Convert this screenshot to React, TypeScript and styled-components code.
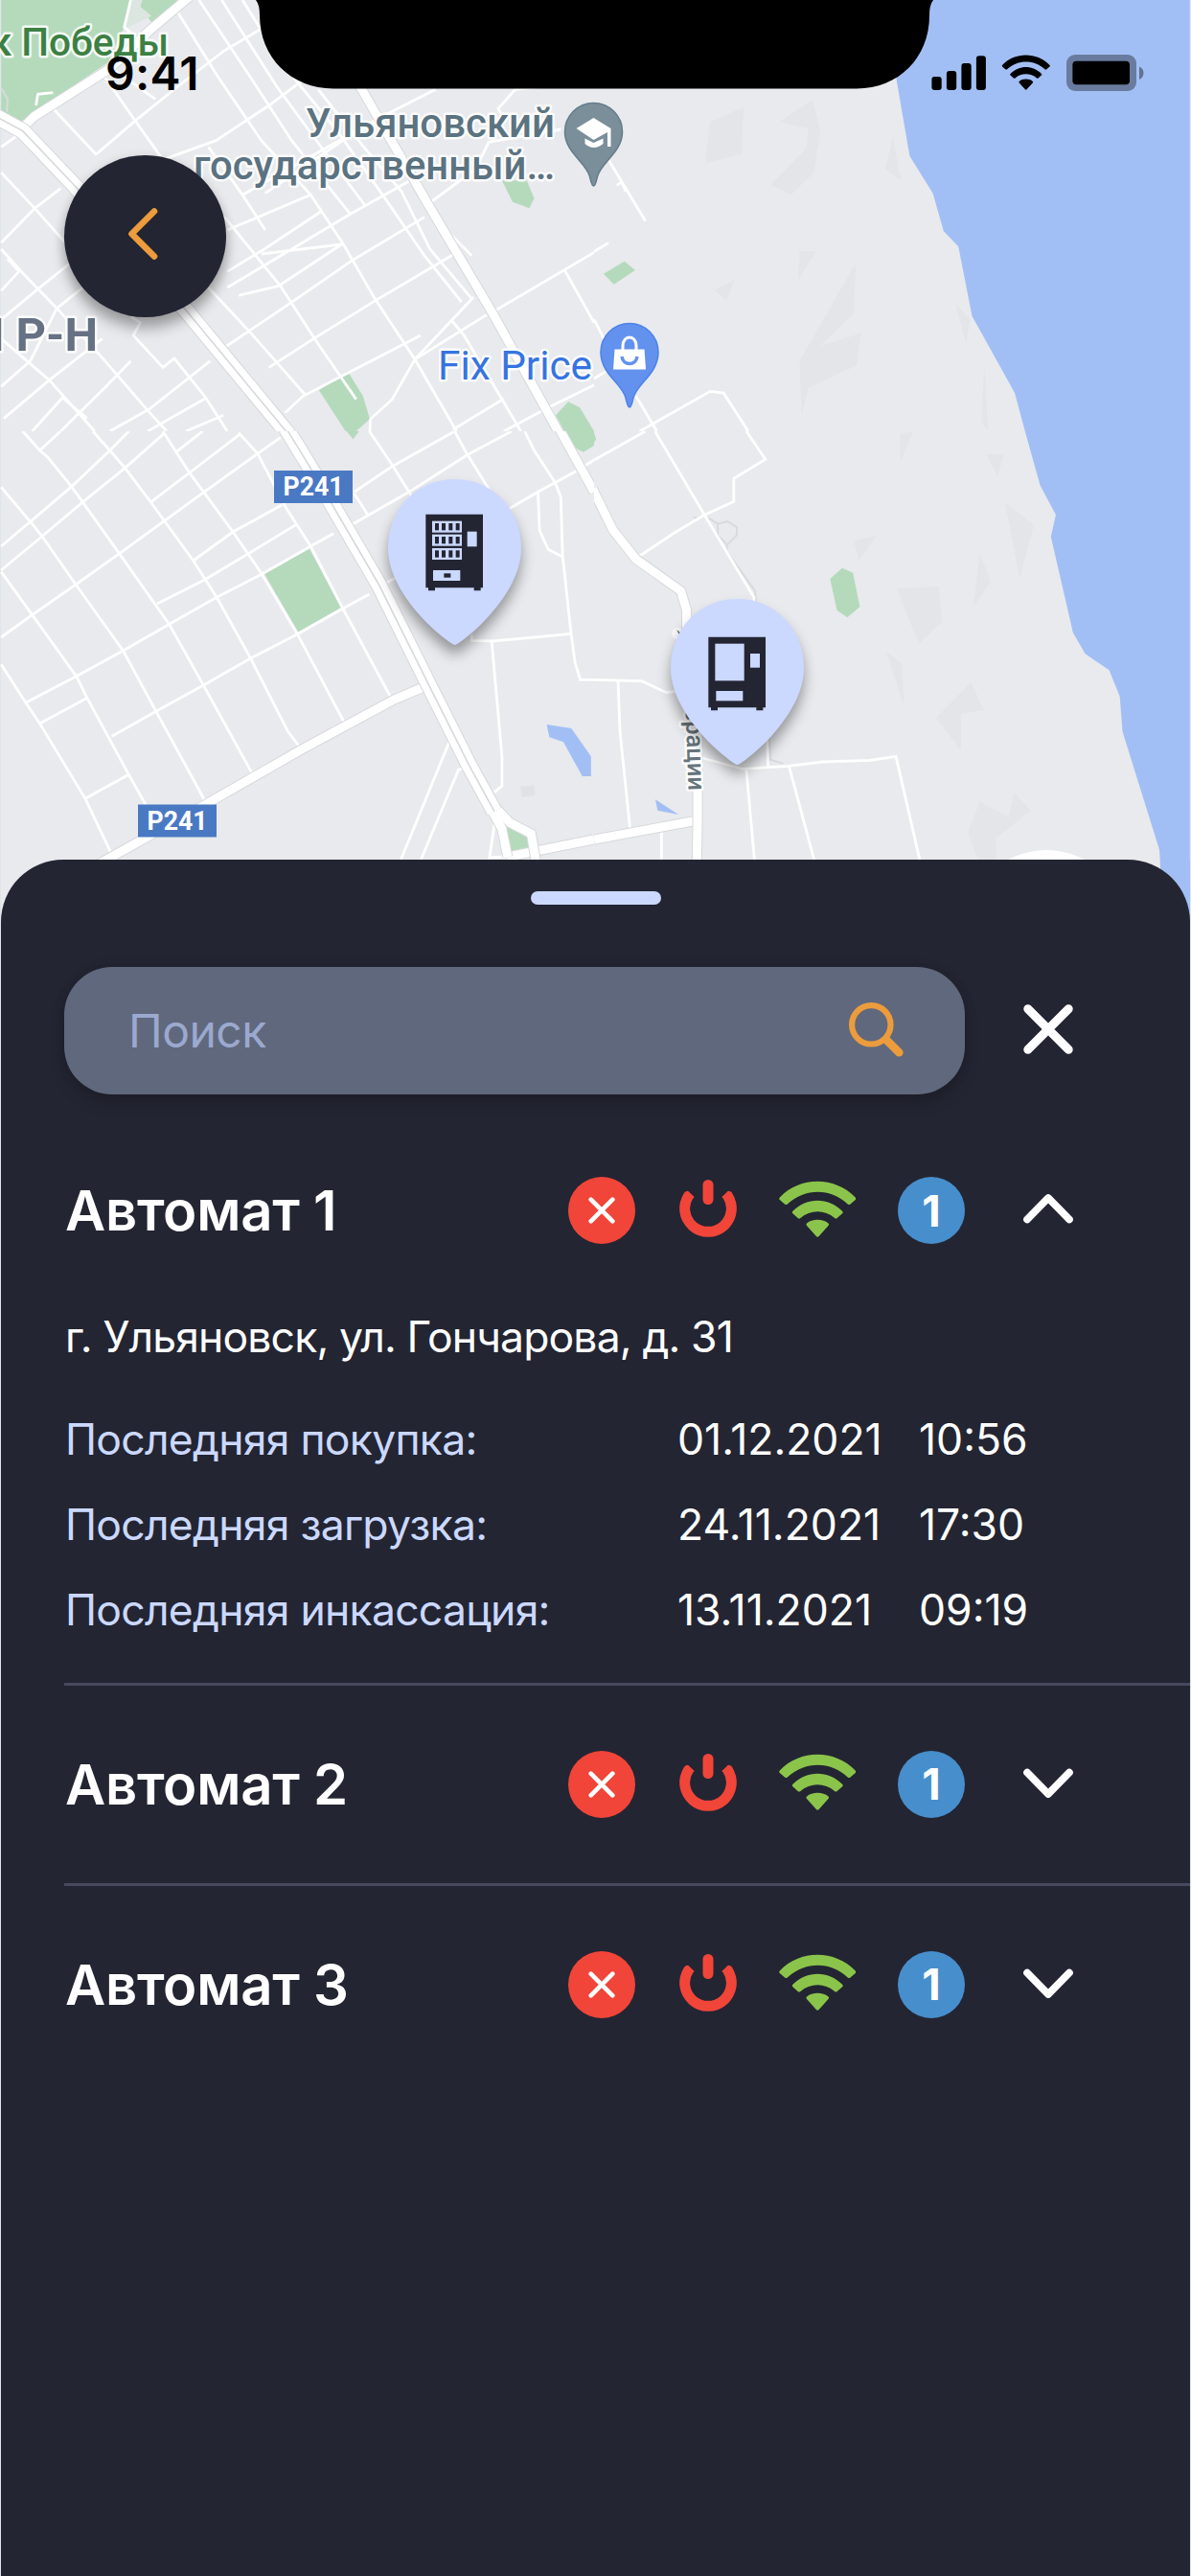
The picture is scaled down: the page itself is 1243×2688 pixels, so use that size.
import React, { useState } from "react";
import styled, { createGlobalStyle } from "styled-components";

const color = {
  ink: "#232532",
  field: "#60687d",
  hint: "#9ba9cf",
  lavender: "#cbd8ff",
  orange: "#ec9c3c",
  red: "#f14539",
  green: "#8bc44a",
  blue: "#478ecc",
  line: "#48495f",
};

const GlobalStyle = createGlobalStyle`
  *, *::before, *::after { box-sizing: border-box; }
  body { margin: 0; background: #dfe6ea; }
  button { border: 0; padding: 0; background: none; cursor: pointer; }
`;

const Screen = styled.main`
  position: relative;
  display: flex;
  flex-direction: column;
  width: 1243px;
  height: 2688px;
  padding: 0 1px;
  overflow: hidden;
  font-family: Inter, "Liberation Sans", sans-serif;
`;

const MapArea = styled.section`
  position: relative;
  flex: none;
  height: 897px;
`;

const MapSvg = styled.svg`
  position: absolute;
  top: 0;
  left: -1px;
  display: block;

  .park { fill: #b4dabb; }
  .water { fill: #a2bff5; }
  .relief { fill: #e4e5e9; }
  .street { fill: none; stroke: #fff; stroke-width: 2.8; vector-effect: non-scaling-stroke; }
  .path { fill: none; stroke: #d9dadd; stroke-width: 2; vector-effect: non-scaling-stroke; }
  .casing { fill: none; stroke: #d7d8dc; stroke-width: 11; vector-effect: non-scaling-stroke; }
  .avenue { fill: none; stroke: #fff; stroke-width: 9; vector-effect: non-scaling-stroke; }
  .wideCasing { fill: none; stroke: #d7d8dc; stroke-width: 17.5; vector-effect: non-scaling-stroke; }
  .wide { fill: none; stroke: #fff; stroke-width: 15.5; vector-effect: non-scaling-stroke; }
  .median { fill: none; stroke: #d7d8dc; stroke-width: 1.6; vector-effect: non-scaling-stroke; }
  text {
    font-family: Roboto, "Open Sans", sans-serif;
    font-weight: 500;
    paint-order: stroke;
    stroke: rgba(255, 255, 255, 0.85);
    stroke-width: 5;
    stroke-linejoin: round;
  }
  .shop { font-weight: 400; }
  .district { font-weight: 700; }
  .shield { fill: #fff; stroke: none; font-weight: 700; font-size: 27px; }
`;

const BackButton = styled.button`
  position: absolute;
  left: 66px;
  top: 162px;
  width: 169px;
  height: 169px;
  border-radius: 50%;
  background: ${color.ink};
  box-shadow: 0 13px 13px rgba(0, 0, 0, 0.25), 0 3px 12px rgba(0, 0, 0, 0.16);
`;

const PinMarker = styled.svg<{ $x: number; $y: number }>`
  position: absolute;
  left: ${(p) => p.$x}px;
  top: ${(p) => p.$y}px;
  width: 139px;
  height: 173px;
  overflow: visible;
  filter: drop-shadow(0 10px 7px rgba(0, 0, 0, 0.36));
`;

const StatusBar = styled.div`
  position: absolute;
  inset: 0 0 auto 0;
  height: 120px;
`;

const Clock = styled.time`
  position: absolute;
  left: 109px;
  top: 47px;
  font-size: 48px;
  line-height: 60px;
  font-weight: 600;
  letter-spacing: 0.3px;
  color: #000;
`;

const StatusSvg = styled.svg`
  position: absolute;
  left: -1px;
  top: 0;
`;

const Sheet = styled.section`
  position: relative;
  flex: 1;
  display: flex;
  flex-direction: column;
  padding: 33px 0 0 66px;
  border-radius: 65px 65px 0 0;
  background: ${color.ink};
`;

const Handle = styled.div`
  width: 136px;
  height: 14px;
  margin: 0 0 65px 487px;
  border-radius: 7px;
  background: ${color.lavender};
`;

const SearchRow = styled.div`
  display: flex;
  align-items: center;
  gap: 61px;
  height: 133px;
`;

const SearchField = styled.label`
  display: flex;
  align-items: center;
  width: 940px;
  height: 133px;
  padding: 0 64px 0 67px;
  border-radius: 50px;
  background: ${color.field};
  box-shadow: 0 10px 16px rgba(0, 0, 0, 0.14), 0 0 12px rgba(0, 0, 0, 0.12);
`;

const SearchInput = styled.input`
  flex: 1;
  min-width: 0;
  border: 0;
  outline: 0;
  padding: 0;
  background: none;
  font: 400 48px/60px Inter, "Liberation Sans", sans-serif;
  letter-spacing: -0.5px;
  color: #fff;
  &::placeholder { color: ${color.hint}; opacity: 1; }
`;

const PlainButton = styled.button`
  display: flex;
  margin-bottom: 3px;
`;

const List = styled.ul`
  display: flex;
  flex-direction: column;
  margin: 18px 0 0;
  padding: 0;
  list-style: none;
`;

const Item = styled.li`
  & + & { border-top: 3px solid ${color.line}; }
`;

const ItemHead = styled.div`
  display: flex;
  align-items: center;
  height: 206px;
  padding-right: 122px;
`;

const ItemTitle = styled.h2`
  flex: 1;
  margin: 0 0 0 1px;
  font-size: 58px;
  line-height: 72px;
  font-weight: 600;
  letter-spacing: -0.25px;
  color: #fff;
`;

const Statuses = styled.div`
  display: flex;
  align-items: center;
  gap: 44px;
  margin-right: 61px;
`;

const Dot = styled.span<{ $fill: string; $after?: number }>`
  display: flex;
  align-items: center;
  justify-content: center;
  width: 70px;
  height: 70px;
  margin-right: ${(p) => p.$after ?? 0}px;
  border-radius: 50%;
  background: ${(p) => p.$fill};
  font-size: 45px;
  line-height: 1;
  font-weight: 700;
  color: #fff;
`;

const Glyph = styled.span<{ $lift: number }>`
  display: flex;
  margin-bottom: ${(p) => p.$lift}px;
`;

const Details = styled.div`
  padding-bottom: 31px;
`;

const Address = styled.p`
  margin: 0 0 33px 1px;
  font-size: 44.5px;
  line-height: 58px;
  letter-spacing: -0.86px;
  color: #fff;
`;

const Facts = styled.dl`
  display: grid;
  grid-template-columns: 639px 252px auto;
  grid-auto-rows: 89.3px;
  align-items: center;
  margin: 0 0 0 1px;
  font-size: 44.5px;
`;

const FactName = styled.dt`
  letter-spacing: -0.74px;
  color: ${color.lavender};
`;

const FactValue = styled.dd`
  margin: 0;
  letter-spacing: 0;
  color: #fff;
`;

const CrossIcon = () => (
  <svg width="52" height="52" viewBox="0 0 52 52" stroke="#fff" strokeWidth="9" strokeLinecap="round">
    <path d="M4.8 4.8 47.2 47.2M47.2 4.8 4.8 47.2" />
  </svg>
);

const SearchIcon = () => (
  <svg width="57" height="57" viewBox="0 0 57 57" fill="none" stroke={color.orange} strokeLinecap="round">
    <circle cx="23.3" cy="23.3" r="20.2" strokeWidth="6.2" />
    <path d="m39.5 39.5 12.8 12.8" strokeWidth="8.6" />
  </svg>
);

const FailIcon = () => (
  <svg width="28" height="28" viewBox="0 0 28 28" stroke="#fff" strokeWidth="4.6" strokeLinecap="round">
    <path d="M2.7 2.7 25.3 25.3M25.3 2.7 2.7 25.3" />
  </svg>
);

const PowerIcon = () => (
  <svg width="60" height="60" viewBox="0 0 60 60" fill={color.red}>
    <path d="M11.400 14Q8.600 9.800 5.200 13.500A29.800 29.800 0 1 0 54.800 13.500Q51.400 9.800 48.600 14L44.800 17.500Q44 18.500 45.600 19.300A18.900 18.900 0 1 1 14.400 19.300Q16 18.500 15.200 17.500Z" />
    <rect x="24.500" y="0" width="11" height="26" rx="5.500" />
  </svg>
);

const WifiIcon = ({ fill, width, height }: { fill: string; width: number; height: number }) => (
  <svg width={width} height={height} viewBox="0 0 402 176" preserveAspectRatio="none" fill={fill}>
    <path
      transform="scale(1 .5)"
      d="M4 104C110 -28 290 -28 398 104Q404 112 398 120L372 146Q365 153 358 146C270 45 135 45 44 146Q37 153 30 146L4 120Q-2 112 4 104ZM72 190C145 102 257 102 330 190Q336 198 330 205L303 232Q297 238 290 232C240 180 162 180 112 232Q105 238 98 232L72 205Q66 198 72 190ZM145 266C172 236 230 236 257 266Q263 273 257 280L208 346Q201 354 194 346L145 280Q139 273 145 266Z"
    />
  </svg>
);

const Chevron = ({ open }: { open: boolean }) => (
  <svg width="52" height="31" viewBox="0 0 52 31" fill="none" stroke="#fff" strokeWidth="7.6" strokeLinecap="round" strokeLinejoin="round">
    <path d={open ? "M4 26.500 26 4 48 26.500" : "M4 4.500 26 27 48 4.500"} />
  </svg>
);

const pinShape =
  "M208.500 519C195 519 0 372 0 217C0 90 93 0 208.500 0S417 90 417 217C417 372 222 519 208.500 519Z";

const SnackPin = () => (
  <PinMarker $x={404} $y={499.5} viewBox="0 0 417 519">
    <path d={pinShape} fill={color.lavender} />
    <path d="M118 110H297V340H290V349H269V340H147V349H126V340H118Z" fill={color.ink} />
    {[131, 173, 216].map((y) => (
      <g key={y}>
        <rect x="138" y={y} width="93" height="36" fill={color.lavender} />
        {[147, 168, 190, 212].map((x) => (
          <rect key={x} x={x} y={y + 7} width="12" height="22" fill={color.ink} />
        ))}
      </g>
    ))}
    <rect x="248" y="164" width="30" height="47" fill={color.lavender} />
    <rect x="141" y="285" width="85" height="33" fill={color.lavender} />
    <rect x="175" y="295" width="21" height="13" fill={color.ink} />
  </PinMarker>
);

const CoffeePin = () => (
  <PinMarker $x={698.7} $y={625.3} viewBox="0 0 417 519">
    <path d={pinShape} fill={color.lavender} />
    <path d="M118 119H297V340H289V349H268V340H147V349H126V340H118Z" fill={color.ink} />
    <rect x="139" y="140" width="91" height="116" fill={color.lavender} />
    <rect x="249" y="171" width="30" height="44" fill={color.lavender} />
    <rect x="142" y="288" width="84" height="31" fill={color.lavender} />
  </PinMarker>
);

const Lines = ({ kind, points }: { kind: string; points: string[] }) => (
  <>
    {points.map((p) => (
      <polyline key={p} className={kind} points={p} />
    ))}
  </>
);

const Areas = ({ kind, points }: { kind: string; points: string[] }) => (
  <>
    {points.map((p) => (
      <polygon key={p} className={kind} points={p} />
    ))}
  </>
);

const Avenue = ({ points }: { points: string[] }) => (
  <>
    <Lines kind="casing" points={points} />
    <Lines kind="avenue" points={points} />
  </>
);

const Highway = ({ points }: { points: string[] }) => (
  <>
    <Lines kind="wideCasing" points={points} />
    <Lines kind="wide" points={points} />
    <Lines kind="median" points={points} />
  </>
);

/* The map is drawn as four tiles, each in its own tile units. */
const Tile = ({ x, y, w, children }: { x: number; y: number; w: number; children: React.ReactNode }) => (
  <svg x={x} y={y} width={w} height={450} viewBox="0 0 1568 1350" preserveAspectRatio="none">
    {children}
  </svg>
);

const CityMap = () => (
  <MapSvg width="1243" height="970" viewBox="0 0 1243 970">
    <rect x="1" width="1241" height="970" fill="#e8eaed" />
    <Tile x={0} y={0} w={620}>
      <Areas kind="park" points={["3,0 345,0 328,85 285,195 50,385 3,350", "375,0 490,0 400,70 370,20", "842,1222 918,1163 958,1240 976,1312 940,1350 912,1350", "1325,565 1390,565 1410,620 1397,652 1353,632", "1467,1300 1500,1258 1530,1275 1568,1350 1490,1350"]} />
      <polygon points="345,0 375,0 370,20 400,50 330,90" fill="#dce6e0" />
      <Lines
        kind="street"
        points={[
          "345,0 328,85 400,160",
          "470,40 575,240 690,440 820,610 905,762 992,940 1095,1125 1205,1350",
          "525,0 660,240 770,440 850,560 925,670",
          "585,0 730,270 860,480 965,645",
          "640,0 690,95 780,250 890,410 1010,610 1120,800 1218,945",
          "840,280 960,460 1060,600 1135,780 1245,935",
          "1190,1000 1225,1050 1300,1200 1375,1350",
          "270,230 355,375 430,500 600,690 740,895 830,1060 940,1250",
          "140,340 255,485",
          "550,460 640,610 700,720",
          "550,900 660,1040 805,1235",
          "690,90 590,160 470,270 355,380 255,482",
          "410,310 290,210",
          "800,250 710,330 570,440 430,500",
          "1150,280 1000,370 850,470 640,610",
          "1010,370 905,440 700,605",
          "1440,270 1360,280 1315,340 1330,370",
          "1480,405 1290,445 1255,530 1140,630",
          "1090,560 925,670 600,900",
          "820,610 600,720",
          "850,660 700,778 600,850",
          "905,762 735,895 630,925",
          "1120,680 930,815 765,950 590,1090",
          "1195,798 992,940 828,1060 710,1150",
          "900,765 690,795",
          "1250,930 1095,1125",
          "1135,670 1245,800",
          "1285,985 1095,1125 1035,1250 978,1312 976,1350",
          "1110,1050 930,1160 800,1240 752,1292",
          "1310,970 1490,845 1568,790",
          "1490,845 1568,1010",
          "1330,1248 1195,1345",
          "1568,1205 1440,1280 1330,1350",
          "3,540 90,650 210,810 260,900",
          "3,780 60,855 150,965 270,1120 390,1285 440,1350",
          "3,760 92,652 160,590",
          "3,910 50,850 20,810",
          "3,1000 100,905 210,800",
          "3,1210 80,1130 150,965 240,880",
          "3,1060 130,1190 250,1350",
          "10,1310 130,1190 270,1060",
          "345,990 370,1010 352,1050 430,1150 460,1122 540,1240 600,1350",
          "85,1350 165,1245 230,1310",
          "160,1350 280,1210 345,1130",
          "290,1350 395,1280 555,1130",
          "390,1350 545,1245",
          "490,1350 590,1300",
          "95,330 100,295 140,290",
          "3,460 45,425",
        ]}
      />
      <Lines kind="path" points={["3,275 20,310 18,350"]} />
      <Avenue points={["60,400 90,365 290,215 395,95 500,-10", "930,235 955,280 1130,640 1300,980 1478,1360"]} />
      <Highway points={["-10,365 60,410 200,585 490,970 762,1360"]} />
    </Tile>
    <Tile x={620} y={0} w={623}>
      <Areas kind="relief" points={["305,382 393,335 388,483 292,510", "573,312 595,410 577,540 517,610 465,578 557,465 563,402 487,382", "785,430 805,563 765,528", "540,787 583,787 537,875", "316,908 370,875 348,942", "688,822 682,982 593,1083 700,1043 690,1143 563,1215 545,1300 540,1130", "950,950 988,1000 977,1075", "1025,1140 1035,1350 1018,1320"]} />
      <Areas kind="park" points={["25,857 80,818 108,846 52,890"]} />
      <Lines kind="street" points={["38,500 135,692", "60,580 72,570 84,600", "0,788 38,760", "0,1000 30,1070", "0,1185 35,1160", "110,1240 165,1350", "120,1350 305,1225 340,1230 405,1350"]} />
      <Areas kind="water" points={["760,0 1565,0 1565,1350 1132,1350 1105,1230 993,990 957,772 918,723 890,605 829,488 793,240"]} />
    </Tile>
    <Tile x={0} y={450} w={620}>
      <Areas kind="park" points={["697,445 817,368 900,552 787,628", "915,0 948,0 932,25", "1490,0 1568,0 1568,45 1540,65 1515,50", "1325,1200 1390,1265 1405,1310 1345,1320"]} />
      <Areas kind="water" points={["1443,918 1508,930 1560,1018 1560,1080 1537,1080 1487,973 1450,958"]} />
      <polygon points="1373,1113 1410,1108 1413,1140 1378,1146" fill="#e1e2e5" />
      <Lines
        kind="street"
        points={[
          "60,0 105,60 125,80 190,175 315,383 447,605 537,795 665,1070",
          "245,0 290,60 330,115 400,225 510,405 572,520 662,712 760,940 792,990",
          "430,0 500,130 615,315 690,445 785,635 908,910",
          "630,5 680,70 755,240 820,360 905,555 1030,830",
          "3,175 80,283 112,330 200,480 325,687 412,877 540,1155",
          "3,440 85,575 202,768 230,835 340,1075 385,1170",
          "3,730 68,850 105,915 225,1150 295,1325",
          "3,360 80,283 190,172 290,60 340,0",
          "3,435 110,330 220,220 330,115 435,5",
          "105,60 160,0",
          "3,645 85,575 200,480 315,383 545,185 680,70 740,20",
          "400,220 500,130 635,8",
          "465,65 535,0",
          "510,405 615,315 745,230",
          "415,540 540,465 660,380 785,290",
          "68,850 200,768 325,687 445,605 572,520 695,445 820,360 880,320",
          "105,915 230,835",
          "295,955 412,877 537,795 660,712 785,635 905,555 975,510",
          "225,1150 340,1075",
          "975,0 1035,105 1090,210",
          "1200,0 1232,70 1295,190",
          "935,190 1035,110 1200,0",
          "925,295 1080,190 1232,75 1350,0",
          "935,195 970,260",
          "1385,0 1410,60 1465,160 1480,205 1485,390 1508,640 1518,725 1532,778 1568,778",
          "1340,245 1420,190 1520,125 1568,90",
          "1420,190 1424,310 1447,370 1485,393",
          "1245,635 1245,655 1300,657 1508,634",
          "1298,660 1325,1020 1325,1110 1305,1130",
          "1185,975 1055,1350",
          "1222,1055 1210,1060 1108,1350",
          "1010,480 1045,458",
          "1305,1230 1292,1335 1350,1330",
        ]}
      />
      <Avenue points={["260,1355 540,1170 790,1000 1040,840 1130,795", "1475,-10 1568,190", "1340,1332 1568,1278"]} />
      <Avenue points={["1310,1180 1345,1225 1402,1260 1415,1350", "1295,1180 1325,1245 1340,1332"]} />
      <Highway points={["755,-10 840,155 1000,480 1130,790 1240,1050 1305,1190"]} />
    </Tile>
    <Tile x={620} y={450} w={623}>
      <Areas kind="relief" points={["803,10 838,0 805,95", "1030,72 1077,72 1060,140", "1080,225 1155,293 1118,460", "682,342 742,328 695,405", "1013,382 1042,470 997,548", "795,493 905,485 914,597 853,665", "767,688 808,728 815,865", "990,787 1024,873 964,885 964,1000 898,897", "1013,1160 1090,1207 1103,1130 1147,1188 1055,1275 1058,1350 1010,1350 982,1255"]} />
      <Areas kind="park" points={["652,428 680,443 698,550 665,583 638,560 620,462", "0,5 5,25 0,35"]} />
      <Areas kind="water" points={["1132,0 1172,170 1213,262 1200,330 1258,630 1290,697 1353,748 1381,830 1388,940 1485,1310 1487,1350 1565,1350 1565,0", "161,1153 222,1200 167,1187"]} />
      <Lines kind="path" points={["298,270 325,290 350,282 375,300 375,325 350,355 325,325 325,290", "350,355 347,378", "345,370 423,500 425,535", "460,960 463,1028 497,1040", "262,270 275,272"]} />
      <Lines
        kind="street"
        points={[
          "0,90 135,0",
          "160,0 290,262 420,520 420,560",
          "400,0 450,88 367,148 367,220 290,262 215,315 120,390",
          "0,778 125,782 190,818 230,812",
          "63,782 68,940 95,1250",
          "455,960 457,1050",
          "285,1023 390,1057 510,1048 600,1035 725,1030 793,1018 857,1350",
          "400,1060 422,1350",
          "512,1048 580,1350",
          "177,1250 177,1350",
        ]}
      />
      <Avenue points={["-4,180 50,310 110,400 228,500 243,560 243,640", "0,1278 272,1218"]} />
      <Avenue points={["272,840 272,1220 270,1350"]} />
    </Tile>
    <polygon className="water" points="1210.800,899 1211,912 1208,930 1208,970 1242,970 1242,899" />
    <circle cx="1092" cy="972" r="85" fill="#fff" />
    <text x="176" y="58" textAnchor="end" fontSize="40.500" fill="#3c8043">к Победы</text>
    <g fontSize="42" fill="#5b7380">
      <text x="319" y="143" textLength="260" lengthAdjust="spacingAndGlyphs">Ульяновский</text>
      <text x="202" y="187" textLength="377" lengthAdjust="spacingAndGlyphs">государственный…</text>
    </g>
    <text className="shop" x="457" y="396" fontSize="42" fill="#3674e0" textLength="161" lengthAdjust="spacingAndGlyphs">Fix Price</text>
    <text className="district" x="102" y="366" textAnchor="end" fontSize="49" fill="#667283">Й Р-Н</text>
    <circle cx="707" cy="661" r="6" fill="#f6f7f8" />
    <path d="M706 657l4 3 0 4z" fill="#56666c" />
    <text transform="translate(718.500 825) rotate(88)" textAnchor="end" fontSize="25.500" fill="#66747b">ерации</text>
    <rect x="286" y="491" width="82" height="34" fill="#4a79c4" />
    <text className="shield" x="295.500" y="517" textLength="63" lengthAdjust="spacingAndGlyphs">P241</text>
    <rect x="144" y="839.500" width="82" height="34" fill="#4a79c4" />
    <text className="shield" x="153.500" y="865.500" textLength="63" lengthAdjust="spacingAndGlyphs">P241</text>
    <g transform="translate(619.500 107)">
      <path d="M0 87C-2 87-3 81-4 77C-8 62-30 52-30 30.500A30 30 0 0 1 30 30.500C30 52 8 62 4 77C3 81 2 87 0 87Z" fill="#7b8f9a" stroke="#657e8a" strokeWidth="1.600" />
      <path d="M-18 27 0 16 18 27V46H14.500V31L0 39Z" fill="#fff" />
      <path d="M-9 37.500 0 42 10 37.500V43Q0 51-9 43Z" fill="#fff" />
    </g>
    <g transform="translate(657 337)">
      <path d="M0 88C-2 88-3 82-4 78C-8 63-30 53-30 30.500A30 30 0 0 1 30 30.500C30 53 8 63 4 78C3 82 2 88 0 88Z" fill="#6391ee" stroke="#4d84ea" strokeWidth="1.600" />
      <path d="M-15.500 27.500H15.500L17 48.500H-17Z" fill="#fff" />
      <path d="M-7 28V24C-7 12 7 12 7 24V28" fill="none" stroke="#fff" strokeWidth="3" />
      <path d="M-8 35C-7 45 7 45 8 35" fill="none" stroke="#6391ee" strokeWidth="3.400" />
    </g>
  </MapSvg>
);

const DeviceStatus = () => (
  <StatusBar>
    <StatusSvg width="1243" height="110" viewBox="0 0 1243 110">
      <path d="M267 0H974Q970 5 970 16C970 60 938 92.500 894 92.500H348C304 92.500 271 60 271 16Q271 5 267 0Z" />
      <rect x="972.400" y="80" width="10.300" height="14" rx="3" />
      <rect x="987.900" y="74" width="10.300" height="20" rx="3" />
      <rect x="1003.400" y="66" width="10.300" height="28" rx="3" />
      <rect x="1018.900" y="58.300" width="10" height="35.700" rx="3" />
      <g transform="translate(1045.500 57)">
        <WifiIcon fill="#000" width={50.5} height={37} />
      </g>
      <rect x="1113" y="57" width="73" height="38" rx="9" opacity=".35" />
      <rect x="1119.400" y="63.700" width="59.600" height="24.600" rx="4" />
      <path d="M1189 69.500Q1193.500 71.500 1193.500 76.300T1189 83Z" opacity=".4" />
    </StatusSvg>
    <Clock>9:41</Clock>
  </StatusBar>
);

type Machine = { name: string; alerts: number; address: string; facts: [string, string, string][] };

const facts: [string, string, string][] = [
  ["Последняя покупка:", "01.12.2021", "10:56"],
  ["Последняя загрузка:", "24.11.2021", "17:30"],
  ["Последняя инкассация:", "13.11.2021", "09:19"],
];

const machines: Machine[] = [1, 2, 3].map((n) => ({
  name: `Автомат ${n}`,
  alerts: 1,
  address: "г. Ульяновск, ул. Гончарова, д. 31",
  facts,
}));

const MachineItem = ({ machine, open, onToggle }: { machine: Machine; open: boolean; onToggle: () => void }) => (
  <Item>
    <ItemHead>
      <ItemTitle>{machine.name}</ItemTitle>
      <Statuses>
        <Dot $fill={color.red} $after={1.5}><FailIcon /></Dot>
        <Glyph $lift={4}><PowerIcon /></Glyph>
        <Glyph $lift={4}><WifiIcon fill={color.green} width={80.5} height={59} /></Glyph>
        <Dot $fill={color.blue}>{machine.alerts}</Dot>
      </Statuses>
      <PlainButton aria-expanded={open} onClick={onToggle}><Chevron open={open} /></PlainButton>
    </ItemHead>
    {open && (
      <Details>
        <Address>{machine.address}</Address>
        <Facts>
          {machine.facts.map(([label, date, time]) => (
            <React.Fragment key={label}>
              <FactName>{label}</FactName>
              <FactValue>{date}</FactValue>
              <FactValue>{time}</FactValue>
            </React.Fragment>
          ))}
        </Facts>
      </Details>
    )}
  </Item>
);

export default function App() {
  const [opened, setOpened] = useState(0);
  return (
    <>
      <GlobalStyle />
      <Screen>
        <MapArea>
          <CityMap />
          <SnackPin />
          <CoffeePin />
          <BackButton>
            <svg width="169" height="169" viewBox="0 0 169 169" fill="none" stroke={color.orange} strokeWidth="6.600" strokeLinecap="round" strokeLinejoin="round">
              <path d="M94 58.500 70.500 82 94 105.500" />
            </svg>
          </BackButton>
          <DeviceStatus />
        </MapArea>
        <Sheet>
          <Handle />
          <SearchRow>
            <SearchField>
              <SearchInput placeholder="Поиск" />
              <Glyph $lift={2}><SearchIcon /></Glyph>
            </SearchField>
            <PlainButton><CrossIcon /></PlainButton>
          </SearchRow>
          <List>
            {machines.map((m, i) => (
              <MachineItem key={m.name} machine={m} open={opened === i} onToggle={() => setOpened(opened === i ? -1 : i)} />
            ))}
          </List>
        </Sheet>
      </Screen>
    </>
  );
}
